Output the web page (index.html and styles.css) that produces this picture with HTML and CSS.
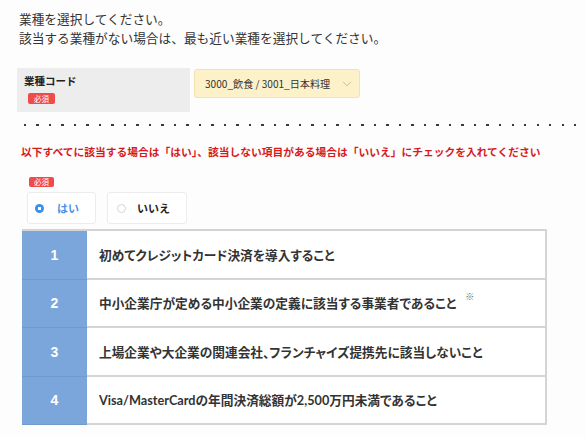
FILE: index.html
```html
<!DOCTYPE html>
<html lang="ja">
<head>
<meta charset="utf-8">
<link rel="stylesheet" href="styles.css">
</head>
<body>
<div class="page">
  <p class="intro">業種を選択してください。<br>該当する業種がない場合は、最も近い業種を選択してください。</p>

  <div class="form-row">
    <div class="label-box">
      <div class="label">業種コード</div>
      <span class="badge">必須</span>
    </div>
    <div class="select">
      <span class="sel-text">3000_飲食 / 3001_日本料理</span>
      <svg class="chev" width="10" height="6" viewBox="0 0 10 6"><path d="M1 0.8 L5 4.8 L9 0.8" fill="none" stroke="#c4bda6" stroke-width="1"/></svg>
    </div>
  </div>

  <div class="dots"></div>

  <p class="notice">以下すべてに該当する場合は「はい」、該当しない項目がある場合は「いいえ」にチェックを入れてください</p>

  <div class="radio-block">
    <span class="badge badge-sm">必須</span>
    <div class="radios">
      <label class="radio-card checked"><span class="radio on"></span><span class="rlabel yes">はい</span></label>
      <label class="radio-card"><span class="radio"></span><span class="rlabel">いいえ</span></label>
    </div>
  </div>

  <div class="table">
    <div class="row"><div class="num">1</div><div class="cell">初めてクレジットカード決済を導入すること</div></div>
    <div class="row"><div class="num">2</div><div class="cell">中小企業庁が定める中小企業の定義に該当する事業者であること<sup class="kome">※</sup></div></div>
    <div class="row"><div class="num">3</div><div class="cell">上場企業や大企業の関連会社、フランチャイズ提携先に該当しないこと</div></div>
    <div class="row"><div class="num">4</div><div class="cell">Visa/MasterCardの年間決済総額が2,500万円未満であること</div></div>
  </div>
</div>
</body>
</html>
```

FILE: styles.css
```css
* { box-sizing: border-box; }
html, body { margin: 0; padding: 0; background: #fdfdfd; }
body {
  font-family: "Noto Sans CJK JP", "Noto Sans", sans-serif;
  color: #333;
}
.page { padding: 9px 0 0 0; }
.intro {
  margin: 0 0 0 19px;
  font-size: 12.7px;
  line-height: 19px;
  color: #333;
}
.form-row {
  display: flex;
  align-items: flex-start;
  margin: 21px 0 0 17px;
  gap: 4px;
}
.label-box {
  flex: 0 0 173px;
  height: 44px;
  background: #ededed;
  padding: 6px 0 0 7px;
}
.label {
  font-size: 10.5px;
  font-weight: bold;
  line-height: 14px;
  color: #222;
}
.badge {
  display: inline-block;
  background: #ef4b4b;
  color: #fff;
  font-size: 7.5px;
  line-height: 11px;
  height: 11px;
  padding: 0 6px;
  border-radius: 2px;
  margin: 5px 0 0 4px;
  vertical-align: top;
}
.select {
  flex: 0 0 166px;
  height: 29px;
  margin-top: 1px;
  background: #fdf1c9;
  border: 1px solid #f1e2b2;
  border-radius: 3px;
  display: flex;
  align-items: center;
  justify-content: space-between;
  padding: 0 7px 0 10px;
  font-size: 10.1px;
  color: #333;
}
.sel-text { white-space: nowrap; }
.chev { flex-shrink: 0; margin-top: 1px; }
.dots {
  margin: 12px 0 0 24px;
  height: 2px;
  background-image: repeating-linear-gradient(to right, #3a3a3a 0 2px, transparent 2px 12.5px);
}
.notice {
  margin: 19px 0 0 21px;
  font-size: 10.75px;
  font-weight: bold;
  line-height: 14px;
  color: #d7191c;
  white-space: nowrap;
}
.radio-block { margin: 18px 0 0 27px; }
.badge-sm {
  margin: 0 0 0 2px;
  height: 10px;
  line-height: 10px;
  font-size: 7.5px;
  padding: 0 5px;
  display: block;
  width: fit-content;
}
.radios {
  display: flex;
  gap: 11px;
  margin-top: 5px;
}
.radio-card {
  height: 32px;
  border: 1px solid #ececec;
  border-radius: 3px;
  background: #fff;
  display: flex;
  align-items: center;
  padding-left: 7px;
  width: 69px;
}
.radio-card + .radio-card { width: 80px; padding-left: 9px; }
.radio {
  width: 9px;
  height: 9px;
  border-radius: 50%;
  border: 1px solid #d5d5d5;
  background: #fff;
  display: inline-block;
}
.radio.on {
  border: none;
  background: radial-gradient(circle, #fff 0 1.6px, #3d8ee8 2px);
}
.rlabel {
  font-size: 11px;
  font-weight: bold;
  margin-left: 11px;
  color: #222;
}
.rlabel.yes { color: #4d92e6; margin-left: 13px; }
.table {
  margin: 5px 0 0 22px;
  width: 525px;
  border-top: 2px solid #d4d4d4;
}
.row {
  display: flex;
  height: 48.5px;
}
.num {
  width: 65px;
  background: #7ba6dc;
  color: #fff;
  font-family: "Liberation Sans", Arial, sans-serif;
  font-weight: bold;
  font-size: 14px;
  display: flex;
  align-items: center;
  justify-content: center;
  border-bottom: 1px solid #6f9ad0;
}
.cell {
  flex: 1;
  background: #fff;
  border-bottom: 2px solid #d4d4d4;
  border-right: 2px solid #d4d4d4;
  display: flex;
  align-items: center;
  padding-left: 12px;
  font-family: Lato, "Noto Sans CJK JP", sans-serif;
  font-size: 12.7px;
  font-weight: bold;
  color: #333;
  font-feature-settings: "palt";
}
.kome {
  font-size: 9px;
  font-weight: normal;
  color: #666;
  align-self: flex-start;
  margin: 10px 0 0 9px;
}
```
